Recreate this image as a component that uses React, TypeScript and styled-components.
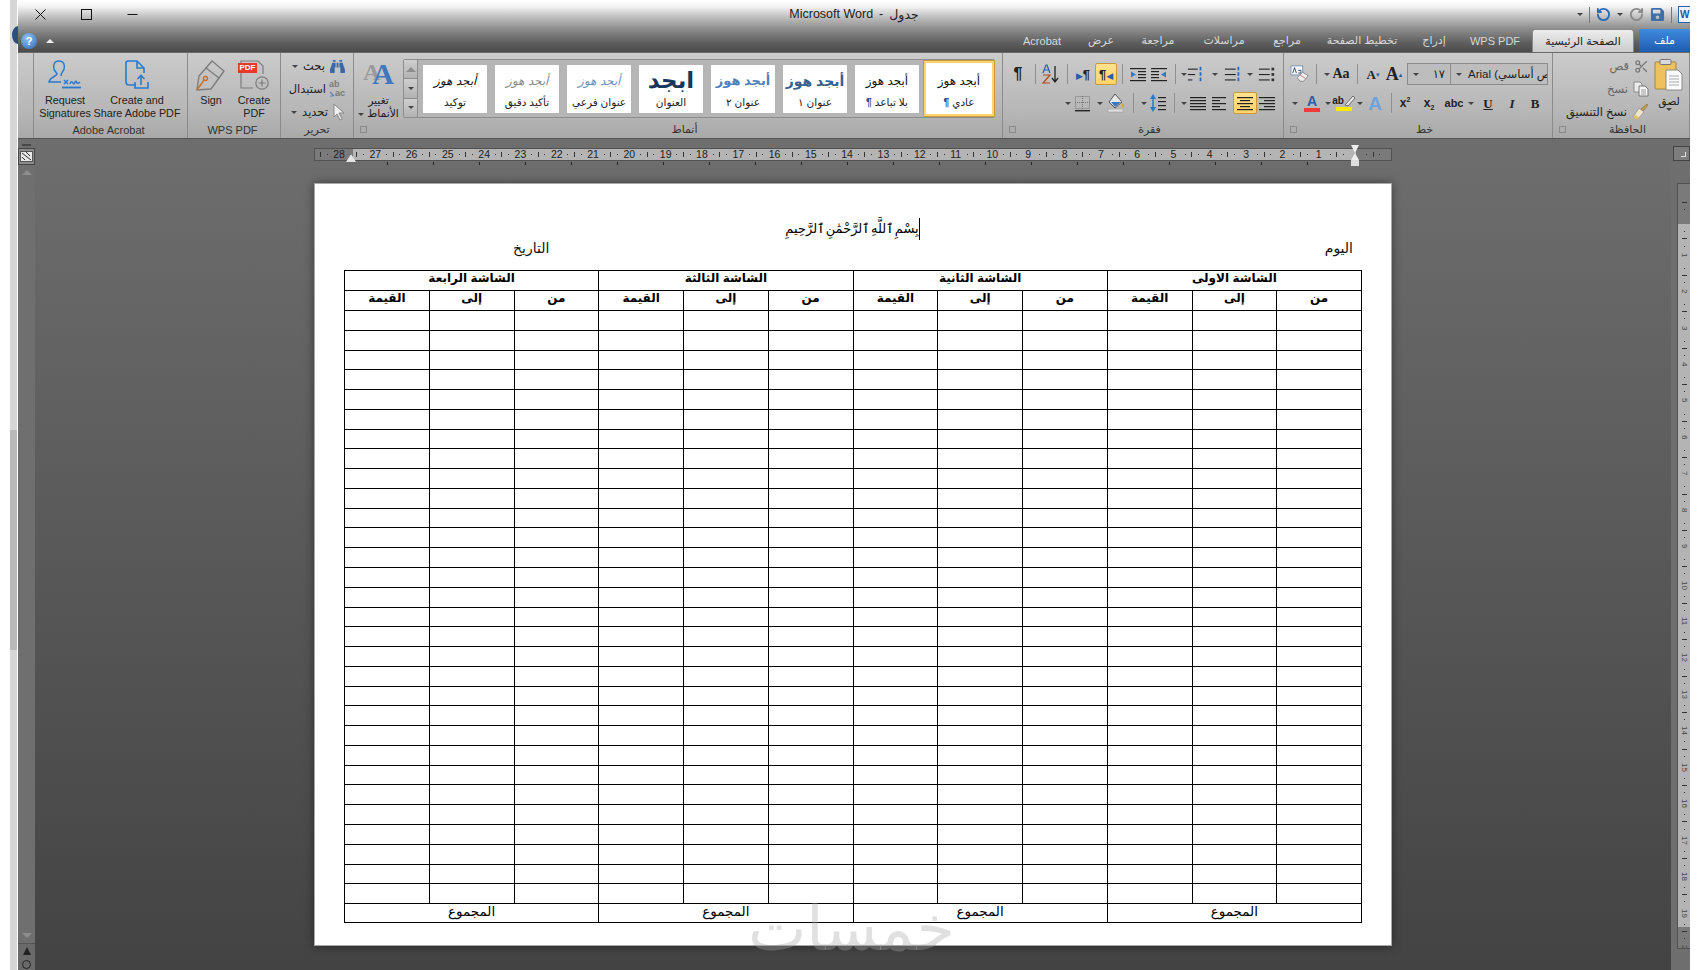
import React from "react";
import styled, { createGlobalStyle } from "styled-components";
import { FaBinoculars, FaSave } from "react-icons/fa";
import { RotateCcw, RotateCw, Scissors } from "lucide-react";

const SANS = `"Liberation Sans", "DejaVu Sans", sans-serif`;

const Global = createGlobalStyle`
  html, body { margin: 0; padding: 0; background: #fff; overflow: hidden; }
  * { box-sizing: border-box; }
  body { font-family: ${SANS}; }
`;

const Shell = styled.div`
  position: relative;
  width: 1700px;
  height: 970px;
  display: flex;
  overflow: hidden;
`;
const LeftEdge = styled.div`
  position: relative;
  width: 18px;
  padding: 430px 1px 0 10px;
  background: linear-gradient(90deg, #fff 0 10px, #d6d6d6 10px 17px, #fff 17px 18px);
`;
const EdgeThumb = styled.div`
  height: 220px;
  background: #b9b9b9;
`;
const EdgeArc = styled.div`
  position: absolute;
  left: 12px;
  top: 26px;
  width: 12px;
  height: 18px;
  border-radius: 50%;
  background: #2a4f86;
`;
const Win = styled.div`
  position: relative;
  width: 1672px;
  display: flex;
  flex-direction: column;
`;
const RightEdge = styled.div`
  width: 10px;
  background: #fff;
`;

/* top bar */
const TopBar = styled.div`
  height: 52px;
  background: linear-gradient(#fff 0, #f4f4f4 12%, #bdbdbd 34%, #8c8c8c 56%, #5f5f5f 82%, #4b4b4b 100%);
`;
const TitleRow = styled.div`
  height: 29px;
  display: grid;
  grid-template-columns: 1fr auto 1fr;
  align-items: center;
`;
const WinButtons = styled.div`
  display: flex;
  align-items: center;
  gap: 35px;
  padding-left: 17px;
`;
const Title = styled.div`
  font-size: 12.5px;
  color: #222;
  display: flex;
  gap: 6px;
`;
const Qat = styled.div`
  display: flex;
  align-items: center;
  justify-content: flex-end;
  gap: 6px;
`;
const QatSep = styled.i`
  width: 1px;
  height: 16px;
  background: #777;
`;
const WordBadge = styled.div`
  width: 12px;
  height: 17px;
  overflow: hidden;
  background: #eef4fb;
  border: 1px solid #2e63a8;
  border-right: 0;
  color: #1e56a0;
  font: bold 10px/15px ${SANS};
  padding-left: 1px;
`;
const TabRow = styled.div`
  height: 23px;
  display: flex;
  align-items: center;
`;
const Help = styled.div`
  width: 16px;
  height: 16px;
  margin-left: 3px;
  border-radius: 50%;
  background: radial-gradient(circle at 40% 30%, #8fc0f0, #2c6cb8);
  color: #fff;
  font: bold 11px/16px ${SANS};
  text-align: center;
`;
const Caret = styled.div`
  margin-left: 9px;
  margin-right: auto;
  border-left: 4px solid transparent;
  border-right: 4px solid transparent;
  border-bottom: 4px solid #eee;
`;
const Tab = styled.div<{ $w: number; $kind?: "home" | "file" }>`
  width: ${(p) => p.$w}px;
  height: 23px;
  display: flex;
  align-items: center;
  justify-content: center;
  font-size: 11px;
  color: ${(p) => (p.$kind === "home" ? "#222" : p.$kind === "file" ? "#fff" : "#d8d8d8")};
  border-radius: 3px 3px 0 0;
  ${(p) => p.$kind === "home" && "background: linear-gradient(#ececec, #cbcbcb); border: 1px solid #8a8a8a; border-bottom: 0; margin-right: 5px;"}
  ${(p) => p.$kind === "file" && "background: linear-gradient(#3f8ade, #1f5cb0);"}
`;

/* ribbon */
const Ribbon = styled.div`
  height: 87px;
  display: flex;
  background: linear-gradient(#cbcbcb, #b6b6b6 70%, #a9a9a9);
  border-top: 1px solid #6a6a6a;
  border-bottom: 1px solid #555;
  color: #222;
`;
const Group = styled.div<{ $w: number }>`
  width: ${(p) => p.$w}px;
  flex: none;
  display: flex;
  flex-direction: column;
  border-right: 1px solid #8b8b8b;
`;
const GroupBody = styled.div<{ $pad?: string }>`
  height: 68px;
  display: flex;
  padding: ${(p) => p.$pad || "0"};
`;
const GroupFoot = styled.div`
  flex: 1;
  display: flex;
  align-items: center;
  font-size: 11px;
  color: #333;
`;
const Launcher = styled.div`
  width: 7px;
  height: 7px;
  margin: 0 0 0 6px;
  border: 1px solid #8a8a8a;
`;
const FootText = styled.div<{ $shift?: number }>`
  flex: 1;
  text-align: center;
  padding-right: ${(p) => p.$shift || 0}px;
`;
const BigTool = styled.div<{ $w: number }>`
  width: ${(p) => p.$w}px;
  flex: none;
  display: flex;
  flex-direction: column;
  align-items: center;
  text-align: center;
  font-size: 10.8px;
  line-height: 13px;
  white-space: nowrap;
`;
const BigIcon = styled.div<{ $h?: number }>`
  height: ${(p) => p.$h || 41}px;
  padding-top: 6px;
`;
const Stack = styled.div<{ $top?: number; $gap?: number; $right?: boolean }>`
  display: flex;
  flex-direction: column;
  padding-top: ${(p) => p.$top || 0}px;
  gap: ${(p) => p.$gap || 0}px;
  margin-left: ${(p) => (p.$right ? "auto" : "0")};
`;
const ToolRow = styled.div<{ $end?: boolean; $gap?: number }>`
  height: 22px;
  flex: none;
  display: flex;
  align-items: center;
  justify-content: ${(p) => (p.$end ? "flex-end" : "flex-start")};
  gap: ${(p) => p.$gap || 0}px;
  font-size: 11.5px;
  white-space: nowrap;
`;
const Cell = styled.div<{ $w: number; $on?: boolean; $ml?: number }>`
  width: ${(p) => p.$w}px;
  height: 22px;
  flex: none;
  margin-left: ${(p) => p.$ml || 0}px;
  display: flex;
  align-items: center;
  justify-content: center;
  color: #222;
  ${(p) => p.$on && "background: linear-gradient(#ffe28f, #ffd26a); border: 1px solid #c99a3b; border-radius: 2px;"}
`;
const Sep = styled.i`
  width: 1px;
  height: 20px;
  background: #8f8f8f;
`;
const Drop = styled.i`
  display: inline-block;
  vertical-align: middle;
  width: 0;
  height: 0;
  border-left: 3px solid transparent;
  border-right: 3px solid transparent;
  border-top: 3px solid #444;
`;
const Glyph = styled.span<{ $size: number; $bold?: boolean; $italic?: boolean; $under?: boolean; $color?: string; $serif?: boolean }>`
  font-family: ${(p) => (p.$serif ? `"Liberation Serif", serif` : SANS)};
  font-size: ${(p) => p.$size}px;
  font-weight: ${(p) => (p.$bold ? 700 : 400)};
  font-style: ${(p) => (p.$italic ? "italic" : "normal")};
  text-decoration: ${(p) => (p.$under ? "underline" : "none")};
  color: ${(p) => p.$color || "#222"};
  line-height: 1;
`;
const Sup = styled.sup`
  font-size: 7px;
  line-height: 0;
`;
const Sub = styled.sub`
  font-size: 7px;
  line-height: 0;
`;
const Swatch = styled.div`
  display: flex;
  flex-direction: column;
  align-items: center;
`;
const SwatchBar = styled.i<{ $color: string }>`
  width: 16px;
  height: 4px;
  background: ${(p) => p.$color};
`;
const Combo = styled.div<{ $w: number; $ml?: number }>`
  width: ${(p) => p.$w}px;
  height: 22px;
  flex: none;
  margin-left: ${(p) => p.$ml || 0}px;
  display: flex;
  align-items: center;
  gap: 6px;
  padding: 0 0 0 5px;
  background: #bdbdbd;
  border: 1px solid #8b8b8b;
  font-size: 11.5px;
  white-space: nowrap;
  overflow: hidden;
`;
const ComboText = styled.span`
  flex: 1;
  text-align: right;
  padding-right: 5px;
`;
const MutedLabel = styled.span`
  color: #666;
`;

/* styles gallery */
const Gallery = styled.div`
  width: 592px;
  height: 59px;
  margin: 6px 0 0 0;
  display: flex;
  gap: 8px;
  background: #b5b5b5;
  border: 1px solid #8d8d8d;
  border-radius: 2px;
`;
const GalleryScroll = styled.div`
  width: 14px;
  flex: none;
  display: flex;
  flex-direction: column;
  border-right: 1px solid #8d8d8d;
  margin-right: -3px;
`;
const ScrollBtn = styled.div`
  flex: 1;
  display: flex;
  align-items: center;
  justify-content: center;
  background: linear-gradient(#cfcfcf, #b2b2b2);
  border-bottom: 1px solid #8d8d8d;
  &:last-child { border-bottom: 0; }
`;
const StyleCard = styled.div<{ $on?: boolean }>`
  width: ${(p) => (p.$on ? 72 : 64)}px;
  height: ${(p) => (p.$on ? 57 : 48)}px;
  margin-top: ${(p) => (p.$on ? 0 : 5)}px;
  margin-left: ${(p) => (p.$on ? -4 : 0)}px;
  flex: none;
  background: #fff;
  ${(p) => p.$on && "border: 3px solid #ffd36e; outline: 1px solid #c99a3b; outline-offset: -1px; padding-top: 2px;"}
  display: flex;
  flex-direction: column;
  align-items: center;
`;
const Sample = styled.div<{ $size?: number; $bold?: boolean; $italic?: boolean; $color?: string }>`
  height: 31px;
  display: flex;
  align-items: center;
  font-size: ${(p) => p.$size || 12}px;
  font-weight: ${(p) => (p.$bold ? 700 : 400)};
  font-style: ${(p) => (p.$italic ? "italic" : "normal")};
  color: ${(p) => p.$color || "#111"};
  white-space: nowrap;
`;
const CardName = styled.div`
  font-size: 10.5px;
  color: #222;
  white-space: nowrap;
`;
const Pilcrow = styled.span`
  color: #2c4f86;
  font-weight: 700;
`;

/* document area */
const Body = styled.div`
  flex: 1;
  min-height: 0;
  display: flex;
  background: linear-gradient(#6e6e6e, #434343);
`;
const LeftRail = styled.div`
  width: 17px;
  flex: none;
  display: flex;
  flex-direction: column;
  align-items: center;
  padding-top: 5px;
  background: #6f6f6f;
`;
const RailGrip = styled.i`
  width: 9px;
  height: 2px;
  background: #474747;
  margin-bottom: 2px;
`;
const RailBtn = styled.div`
  width: 17px;
  height: 17px;
  display: flex;
  align-items: center;
  justify-content: center;
  background: #8b8b8b;
  border: 1px solid #444;
  margin-bottom: 5px;
`;
const RailArrow = styled.i<{ $down?: boolean }>`
  width: 0;
  height: 0;
  border-left: 5px solid transparent;
  border-right: 5px solid transparent;
  ${(p) => (p.$down ? "border-top: 5px solid #8d8d8d;" : "border-bottom: 5px solid #8d8d8d;")}
`;
const RailFill = styled.div`
  flex: 1;
`;
const RailNav = styled.div`
  width: 17px;
  margin-top: 5px;
  padding-top: 3px;
  height: 27px;
  display: flex;
  flex-direction: column;
  align-items: center;
  gap: 5px;
  background: #6a6a6a;
  border-top: 1px solid #555;
`;
const NavDouble = styled.i`
  width: 0;
  height: 0;
  border-left: 4px solid transparent;
  border-right: 4px solid transparent;
  border-bottom: 8px solid #222;
`;
const NavDot = styled.i`
  width: 9px;
  height: 9px;
  border: 1px solid #222;
  border-radius: 50%;
  flex: none;
`;
const Main = styled.div`
  flex: 1;
  padding: 9px 0 0 279px;
  position: relative;
`;
const HRuler = styled.div`
  position: relative;
  width: 1078px;
  height: 13px;
  padding-left: 5px;
  background: linear-gradient(90deg, #7a7a7a 0 38px, #b4b4b4 38px 1041px, #7a7a7a 1041px);
  border: 1px solid #515151;
`;
const RTrack = styled.div`
  display: flex;
  height: 11px;
  overflow: hidden;
`;
const RUnit = styled.div`
  width: 36.3px;
  flex: none;
  display: flex;
  align-items: center;
  justify-content: space-between;
  font: 10.5px/11px ${SANS};
  color: #222;
`;
const RTick = styled.i`
  width: 1px;
  height: 5px;
  background: #333;
`;
const RDot = styled.i`
  width: 1px;
  height: 1px;
  background: #333;
`;
const RNum = styled.span`
  width: 11px;
  text-align: center;
`;
const RLeftMark = styled.i`
  position: absolute;
  left: 31px;
  top: 5px;
  border-left: 5px solid transparent;
  border-right: 5px solid transparent;
  border-bottom: 8px solid #e4e4e4;
`;
const RHour = styled.div`
  position: absolute;
  left: 1035px;
  top: -4px;
  width: 9px;
  display: flex;
  flex-direction: column;
  align-items: center;
`;
const RHourTop = styled.i`
  border-left: 4px solid transparent;
  border-right: 4px solid transparent;
  border-top: 8px solid #eee;
`;
const RHourBot = styled.i`
  border-left: 4px solid transparent;
  border-right: 4px solid transparent;
  border-bottom: 7px solid #eee;
`;
const RHourBox = styled.i`
  width: 8px;
  height: 6px;
  background: #ddd;
`;
const TabStops = styled.div`
  height: 4px;
  margin: 1px 0 17px 73px;
  display: flex;
  gap: 45px;
`;
const TabStop = styled.i`
  width: 1px;
  height: 3px;
  background: #222;
`;
const Page = styled.div`
  width: 1078px;
  height: 763px;
  padding: 33px 30px 0 29px;
  background: #fff;
  border: 1px solid #a8a8a8;
  box-shadow: 0 0 9px rgba(0, 0, 0, 0.45);
`;
const Basmala = styled.div`
  height: 23px;
  display: flex;
  justify-content: center;
  align-items: center;
  font-size: 13px;
  color: #000;
`;
const BasmalaText = styled.span`
  white-space: nowrap;
  letter-spacing: -0.6px;
  word-spacing: -3px;
`;
const Caretline = styled.i`
  width: 1px;
  height: 22px;
  background: #000;
`;
const DateRow = styled.div`
  height: 30px;
  padding: 0 8px 0 169px;
  display: flex;
  justify-content: space-between;
  align-items: flex-start;
  font-size: 14px;
  color: #111;
`;
const Sheet = styled.table`
  width: 1018px;
  table-layout: fixed;
  border-collapse: collapse;
  direction: rtl;
  font-family: ${SANS};
`;
const SheetRow = styled.tr<{ $h: number }>`
  height: ${(p) => p.$h}px;
`;
const SheetCell = styled.td<{ $bold?: boolean; $plain?: boolean }>`
  border: 1px solid #000;
  padding: 0;
  text-align: center;
  vertical-align: top;
  font-size: ${(p) => (p.$plain ? 13.5 : 12)}px;
  font-weight: ${(p) => (p.$bold ? 700 : 400)};
  line-height: 15px;
  color: #000;
`;
const RightRail = styled.div`
  width: 19px;
  flex: none;
  padding: 7px 0 0 2px;
  background: #6e6e6e;
`;
const CornerBtn = styled.div`
  width: 17px;
  height: 15px;
  margin-bottom: 22px;
  background: #7d7d7d;
  border: 1px solid #444;
  display: flex;
  align-items: flex-end;
  justify-content: flex-end;
  padding: 0 3px 3px 0;
`;
const CornerMark = styled.i`
  width: 5px;
  height: 5px;
  border-right: 1px solid #ddd;
  border-bottom: 1px solid #ddd;
`;
const VRuler = styled.div`
  width: 13px;
  margin-left: 4px;
  height: 766px;
  padding-top: 18px;
  overflow: hidden;
  background: linear-gradient(#7a7a7a 0 40px, #b4b4b4 40px 743px, #7a7a7a 743px);
  border: 1px solid #515151;
  border-right: 0;
`;
const VUnit = styled.div`
  height: 36.45px;
  display: flex;
  flex-direction: column;
  align-items: center;
  justify-content: space-between;
  font: 8px/9px ${SANS};
  color: #444;
`;
const VTick = styled.i`
  width: 5px;
  height: 1px;
  background: #333;
`;
const VNum = styled.span`
  writing-mode: vertical-rl;
  height: 9px;
`;
const Watermark = styled.div`
  position: absolute;
  left: 748px;
  top: 896px;
  width: 206px;
  text-align: center;
  font-size: 62px;
  line-height: 66px;
  color: rgba(170, 170, 170, 0.36);
  pointer-events: none;
  white-space: nowrap;
`;

/* drawings */
const Stroke = "#222";
const Bars = ({ rows }: { rows: [number, number][] }) => (
  <svg width="18" height="15" viewBox="0 0 18 15">
    {rows.map((r, i) => (
      <rect key={i} x={r[0]} y={1 + i * 3} width={r[1] - r[0]} height="1.2" fill={Stroke} />
    ))}
  </svg>
);
const justify: [number, number][] = [[1, 17], [1, 17], [1, 17], [1, 17], [1, 17]];
const left: [number, number][] = [[1, 15], [1, 9], [1, 15], [1, 9], [1, 15]];
const center: [number, number][] = [[1, 17], [4, 14], [1, 17], [4, 14], [1, 17]];
const right: [number, number][] = [[1, 17], [6, 17], [1, 17], [6, 17], [1, 17]];

const IndentIcon = ({ flip }: { flip?: boolean }) => (
  <svg width="18" height="15" viewBox="0 0 18 15">
    <g transform={flip ? "translate(18 0) scale(-1 1)" : undefined}>
      {[1, 4, 7, 10, 13].map((y) => (
        <rect key={y} x="1" y={y} width={y === 1 || y === 13 ? 16 : 8} height="1.2" fill={Stroke} />
      ))}
      <path d="M11 7.5 L16 4.5 V10.5 Z" fill="#2a7ad0" />
    </g>
  </svg>
);
const ListIcon = ({ kind }: { kind: "multi" | "num" | "bul" }) => (
  <svg width="20" height="16" viewBox="0 0 20 16">
    {[2, 8, 14].map((y, i) => (
      <rect key={y} x="1" y={y} width={kind === "multi" ? 11 - i * 3 : 12} height="1.2" fill={Stroke} />
    ))}
    {[2, 8, 14].map((y) =>
      kind === "bul" ? (
        <rect key={y} x="15" y={y - 1} width="3" height="3" fill="#333" />
      ) : (
        <rect key={y} x={kind === "multi" ? 14 : 15} y={y - 2} width="2" height="4" fill="#2a6ab8" />
      )
    )}
  </svg>
);
const SortIcon = () => (
  <svg width="18" height="20" viewBox="0 0 18 20">
    <path d="M1 9 L4 1 H5 L8 9 M2.5 6 H6.5" stroke="#2a5ea8" strokeWidth="1.2" fill="none" />
    <path d="M1 11 H8 L1 19 H8" stroke="#b04a20" strokeWidth="1.2" fill="none" />
    <path d="M13 2 V17 M10 14 L13 18 L16 14" stroke="#222" strokeWidth="1.3" fill="none" />
  </svg>
);
const DirIcon = ({ on }: { on?: boolean }) => (
  <Swatch>
    <Glyph $size={13} $bold>
      {on ? "¶" : ""}
      <Glyph $size={9} $color="#2a5ea8">{on ? "◀" : "▶"}</Glyph>
      {on ? "" : "¶"}
    </Glyph>
  </Swatch>
);
const BordersIcon = () => (
  <svg width="18" height="17" viewBox="0 0 18 17">
    <rect x="1.5" y="1.5" width="14" height="12" fill="none" stroke="#777" strokeDasharray="1 1" />
    <path d="M8.5 1 V14 M1 7.5 H16" stroke="#777" strokeDasharray="1 1" />
    <rect x="1" y="15" width="15" height="1.4" fill="#222" />
  </svg>
);
const ShadeIcon = () => (
  <svg width="20" height="20" viewBox="0 0 20 20">
    <path d="M9 1 L16 9 L9 15 L3 9 Z" fill="#e8e8e8" stroke="#555" />
    <path d="M5 9 H15 L9 14 Z" fill="#3a78c0" />
    <path d="M17 10 Q19 13 17 15 Q15 13 17 10" fill="#e4a020" />
    <rect x="2" y="16" width="15" height="3" fill="#ddd" stroke="#999" strokeWidth=".5" />
  </svg>
);
const SpacingIcon = () => (
  <svg width="18" height="20" viewBox="0 0 18 20">
    <path d="M4 1 L7 6 H1 Z M4 19 L7 14 H1 Z" fill="#2a7ad0" />
    <path d="M4 6 V14" stroke="#2a7ad0" strokeWidth="1.5" />
    {[4, 8, 12, 16].map((y) => <rect key={y} x="9" y={y} width="8" height="1.2" fill={Stroke} />)}
  </svg>
);
const EraserIcon = () => (
  <svg width="22" height="20" viewBox="0 0 22 20">
    <rect x="1" y="1" width="13" height="10" fill="#f6f6f6" stroke="#7a92b0" />
    <path d="M3 9 L5 3 L7 9 M9 9 H12 M9 6 H12 V9" stroke="#26497c" fill="none" />
    <path d="M8 14 L14 8 L20 12 L15 18 L11 18 Z" fill="#eeeeee" stroke="#888" />
    <path d="M11 11 L17 15" stroke="#c77" />
  </svg>
);
const MarkerPen = () => (
  <svg width="12" height="12" viewBox="0 0 12 12">
    <path d="M1 10 L9 1 L11 3 L4 11 Z" fill="#e9e9e9" stroke="#6a6a6a" />
  </svg>
);
const PasteIcon = () => (
  <svg width="30" height="32" viewBox="0 0 30 32">
    <rect x="1" y="3" width="21" height="27" rx="1" fill="#edc25e" stroke="#a9853a" />
    <rect x="6" y="0.5" width="11" height="5" rx="1" fill="#d9d9d9" stroke="#777" />
    <path d="M12 11 H24 L28 15 V31 H12 Z" fill="#fbfbfb" stroke="#8a8a8a" />
    <path d="M15 17 H25 M15 20 H25 M15 23 H25 M15 26 H25" stroke="#aaa" />
  </svg>
);
const CopyIcon = () => (
  <svg width="16" height="16" viewBox="0 0 16 16">
    <path d="M1 1 H7 L9 3 V11 H1 Z" fill="#ececec" stroke="#8a8a8a" />
    <path d="M6 5 H12 L15 8 V15 H6 Z" fill="#f6f6f6" stroke="#777" />
    <path d="M8 9 H13 M8 11 H13 M8 13 H13" stroke="#999" />
  </svg>
);
const BrushIcon = () => (
  <svg width="18" height="18" viewBox="0 0 18 18">
    <path d="M10 6 L16 1 L17 2 L12 8 Z" fill="#c89b4e" stroke="#8a6a30" strokeWidth=".6" />
    <path d="M2 14 L8 5 L13 9 L6 17 Z" fill="#ede6cf" stroke="#888" strokeWidth=".7" />
    <path d="M2 14 L5 12 L8 15 L6 17 Z" fill="#e8c260" />
  </svg>
);
const ReplaceMark = () => (
  <svg width="6" height="6" viewBox="0 0 6 6">
    <path d="M1 1 L5 5 M1 5 H4" stroke="#5b83b8" strokeWidth="1.2" fill="none" />
  </svg>
);
const PointerIcon = () => (
  <svg width="12" height="18" viewBox="0 0 12 18">
    <path d="M1 1 V14 L4 11 L7 17 L9 16 L6 10 H11 Z" fill="#f0f0f0" stroke="#888" />
  </svg>
);
const SignatureIcon = () => (
  <svg width="34" height="30" viewBox="0 0 34 30" fill="none" stroke="#2a7bd0" strokeWidth="1.5">
    <path d="M11 2 C6 2 5 6 6 10 C7 13 9 14 9 15 C9 17 2 18 1 23 H13" />
    <path d="M11 2 C16 2 17 6 16 10 C15 13 13 14 13 17" />
    <path d="M16 21 L20 25 M20 21 L16 25" />
    <path d="M22 25 Q23 21 25 24 Q26 26 27 23 Q28 21 29 24 Q30 25 32 23" />
    <path d="M14 28.5 H33" strokeWidth="1.8" />
  </svg>
);
const ShareDocIcon = () => (
  <svg width="26" height="32" viewBox="0 0 26 32" fill="none" stroke="#2a7bd0" strokeWidth="1.6">
    <path d="M12 26 H5 Q2 26 2 23 V4 Q2 2 4 2 H13 L20 9 V14" />
    <path d="M13 2 V9 H20" />
    <path d="M17 26 V17 M13.5 20 L17 16.5 L20.5 20" />
    <path d="M11 23 V29 H24 V23" />
  </svg>
);
const PenIcon = () => (
  <svg width="32" height="34" viewBox="0 0 32 34" fill="none" stroke="#7d7d7d" strokeWidth="1.4">
    <path d="M17 2 L29 12 L24 19 L11 9 Z" />
    <path d="M11 9 L4 17 L2 31 L16 30 L24 19" />
    <path d="M2 31 L9 21" stroke="#c86f2c" />
    <circle cx="10.5" cy="19.5" r="2" stroke="#c86f2c" />
  </svg>
);
const PdfBadge = styled.span`
  position: absolute;
  left: 0;
  top: 4px;
  width: 19px;
  height: 10px;
  background: #e8382c;
  color: #fff;
  font: bold 8px/10px ${SANS};
  text-align: center;
`;
const PdfBox = styled.div`
  position: relative;
  width: 32px;
  height: 34px;
`;
const PdfDocIcon = () => (
  <PdfBox>
    <svg width="32" height="34" viewBox="0 0 32 34" fill="none">
      <path d="M3 4 V2 H20 L25 7 V15 M3 13 V29 H15" stroke="#7d7d7d" strokeWidth="1.2" />
      <circle cx="24" cy="24" r="6.2" stroke="#7d7d7d" strokeWidth="1.2" />
      <path d="M24 20.5 V27.5 M20.5 24 H27.5" stroke="#7d7d7d" strokeWidth="1.2" />
    </svg>
    <PdfBadge>PDF</PdfBadge>
  </PdfBox>
);
const StylesA = styled.div`
  display: flex;
  align-items: flex-end;
  height: 30px;
  font-family: "Liberation Serif", serif;
  font-weight: 700;
`;
const StylesAGray = styled.span`
  font-size: 24px;
  line-height: 24px;
  color: #9a9a9a;
  margin-bottom: 5px;
`;
const StylesABlue = styled.span`
  font-size: 30px;
  line-height: 30px;
  color: #3f78be;
  margin-left: -8px;
`;
const ReplaceStack = styled.div`
  display: flex;
  flex-direction: column;
  font: bold 9px/9px ${SANS};
  color: #7a7a7a;
`;
const ReplaceLine = styled.span`
  display: flex;
  align-items: center;
`;
const RailIcon = () => (
  <svg width="13" height="11" viewBox="0 0 13 11">
    <rect x="0.5" y="0.5" width="12" height="10" fill="#e8e8e8" stroke="#555" />
    <path d="M2 2 L11 9 M6 1 L10 5 M2 6 L5 9" stroke="#333" />
  </svg>
);
const CloseX = () => (
  <svg width="11" height="11" viewBox="0 0 11 11"><path d="M0.5 0.5 L10.5 10.5 M10.5 0.5 L0.5 10.5" stroke="#111" /></svg>
);
const MaxBox = () => (
  <svg width="11" height="11" viewBox="0 0 11 11"><rect x="0.5" y="0.5" width="10" height="10" fill="none" stroke="#111" /></svg>
);
const MinBar = () => (
  <svg width="11" height="11" viewBox="0 0 11 11"><path d="M0.5 5.5 H10.5" stroke="#111" /></svg>
);

const rulerNums = Array.from({ length: 30 }, (_, i) => 28 - i);
const vNums = Array.from({ length: 21 }, (_, i) => i);
const tabStops = Array.from({ length: 21 }, (_, i) => i);
const emptyRows = Array.from({ length: 30 }, (_, i) => Math.round(310 + (i + 1) * 19.77) - Math.round(310 + i * 19.77));
const screens = ["الشاشة الاولى", "الشاشة الثانية", "الشاشة الثالثة", "الشاشة الرابعة"];
const heads = ["من", "إلى", "القيمة"];

const tabs: [string, number][] = [
  ["Acrobat", 64], ["عرض", 54], ["مراجعة", 60], ["مراسلات", 72], ["مراجع", 54],
  ["تخطيط الصفحة", 96], ["إدراج", 48], ["WPS PDF", 74],
];

export default function App() {
  return (
    <Shell>
      <Global />
      <LeftEdge>
        <EdgeArc />
        <EdgeThumb />
      </LeftEdge>
      <Win>
        <TopBar>
          <TitleRow>
            <WinButtons>
              <CloseX />
              <MaxBox />
              <MinBar />
            </WinButtons>
            <Title>
              <span>Microsoft Word</span>
              <span>-</span>
              <span>جدول</span>
            </Title>
            <Qat>
              <Drop />
              <QatSep />
              <RotateCcw size={15} strokeWidth={3} color="#2a6ab8" />
              <Drop />
              <RotateCw size={15} strokeWidth={3} color="#8a8a8a" />
              <FaSave size={15} color="#3f6ea8" />
              <QatSep />
              <WordBadge>W</WordBadge>
            </Qat>
          </TitleRow>
          <TabRow>
            <Help>?</Help>
            <Caret />
            {tabs.map(([t, w]) => (
              <Tab key={t} $w={w}>{t}</Tab>
            ))}
            <Tab $w={102} $kind="home">الصفحة الرئيسية</Tab>
            <Tab $w={51} $kind="file">ملف</Tab>
          </TabRow>
        </TopBar>

        <Ribbon>
          <Group $w={16} />
          <Group $w={154}>
            <GroupBody $pad="0 0 0 4px">
              <BigTool $w={54}>
                <BigIcon><SignatureIcon /></BigIcon>
                Request<br />Signatures
              </BigTool>
              <BigTool $w={90}>
                <BigIcon><ShareDocIcon /></BigIcon>
                Create and<br />Share Adobe PDF
              </BigTool>
            </GroupBody>
            <GroupFoot><FootText $shift={4}>Adobe Acrobat</FootText></GroupFoot>
          </Group>
          <Group $w={93}>
            <GroupBody $pad="0 0 0 2px">
              <BigTool $w={42}>
                <BigIcon><PenIcon /></BigIcon>
                Sign
              </BigTool>
              <BigTool $w={44}>
                <BigIcon><PdfDocIcon /></BigIcon>
                Create<br />PDF
              </BigTool>
            </GroupBody>
            <GroupFoot><FootText $shift={3}>WPS PDF</FootText></GroupFoot>
          </Group>
          <Group $w={73}>
            <GroupBody $pad="0 8px 0 0">
              <Stack $top={2} $gap={1} $right>
                <ToolRow $end $gap={5}>
                  <Drop />
                  <span>بحث</span>
                  <FaBinoculars size={15} color="#3a68a6" />
                </ToolRow>
                <ToolRow $end $gap={3}>
                  <span>استبدال</span>
                  <ReplaceStack>
                    <span>ab</span>
                    <ReplaceLine><ReplaceMark />ac</ReplaceLine>
                  </ReplaceStack>
                </ToolRow>
                <ToolRow $end $gap={5}>
                  <Drop />
                  <span>تحديد</span>
                  <PointerIcon />
                </ToolRow>
              </Stack>
            </GroupBody>
            <GroupFoot><FootText>تحرير</FootText></GroupFoot>
          </Group>
          <Group $w={649}>
            <GroupBody>
              <BigTool $w={49}>
                <BigIcon>
                  <StylesA><StylesAGray>A</StylesAGray><StylesABlue>A</StylesABlue></StylesA>
                </BigIcon>
                تغيير<br />
                <span><Drop /> الأنماط</span>
              </BigTool>
              <Gallery>
                <GalleryScroll>
                  <ScrollBtn><RailArrow /></ScrollBtn>
                  <ScrollBtn><Drop /></ScrollBtn>
                  <ScrollBtn><Drop /></ScrollBtn>
                </GalleryScroll>
                <StyleCard><Sample $italic>أبجد هوز</Sample><CardName>توكيد</CardName></StyleCard>
                <StyleCard><Sample $italic $color="#8a8a8a">أبجد هوز</Sample><CardName>تأكيد دقيق</CardName></StyleCard>
                <StyleCard><Sample $italic $color="#6e93bd">أبجد هوز</Sample><CardName>عنوان فرعي</CardName></StyleCard>
                <StyleCard><Sample $size={23} $bold $color="#17365d">ابجد</Sample><CardName>العنوان</CardName></StyleCard>
                <StyleCard><Sample $size={13} $bold $color="#4f81bd">أبجد هوز</Sample><CardName>عنوان ٢</CardName></StyleCard>
                <StyleCard><Sample $size={14} $bold $color="#366091">أبجد هوز</Sample><CardName>عنوان ١</CardName></StyleCard>
                <StyleCard><Sample>أبجد هوز</Sample><CardName><Pilcrow>¶</Pilcrow> بلا تباعد</CardName></StyleCard>
                <StyleCard $on><Sample>أبجد هوز</Sample><CardName><Pilcrow>¶</Pilcrow> عادي</CardName></StyleCard>
              </Gallery>
            </GroupBody>
            <GroupFoot>
              <Launcher />
              <FootText>أنماط</FootText>
            </GroupFoot>
          </Group>
          <Group $w={281}>
            <GroupBody $pad="0 0 0 5px">
              <Stack $top={10} $gap={7}>
                <ToolRow>
                  <Cell $w={20}><Glyph $size={16} $bold>¶</Glyph></Cell>
                  <Cell $w={14}><Sep /></Cell>
                  <Cell $w={18}><SortIcon /></Cell>
                  <Cell $w={14}><Sep /></Cell>
                  <Cell $w={18}><DirIcon /></Cell>
                  <Cell $w={22} $on $ml={3}><DirIcon on /></Cell>
                  <Cell $w={10}><Sep /></Cell>
                  <Cell $w={21}><IndentIcon flip /></Cell>
                  <Cell $w={21}><IndentIcon /></Cell>
                  <Cell $w={12}><Sep /></Cell>
                  <Cell $w={6}><Drop /></Cell>
                  <Cell $w={18}><ListIcon kind="multi" /></Cell>
                  <Cell $w={19}><Drop /></Cell>
                  <Cell $w={18}><ListIcon kind="num" /></Cell>
                  <Cell $w={16}><Drop /></Cell>
                  <Cell $w={18}><ListIcon kind="bul" /></Cell>
                </ToolRow>
                <ToolRow>
                  <Cell $w={56} />
                  <Cell $w={8}><Drop /></Cell>
                  <Cell $w={22}><BordersIcon /></Cell>
                  <Cell $w={12}><Drop /></Cell>
                  <Cell $w={20}><ShadeIcon /></Cell>
                  <Cell $w={14}><Sep /></Cell>
                  <Cell $w={8}><Drop /></Cell>
                  <Cell $w={19}><SpacingIcon /></Cell>
                  <Cell $w={14}><Sep /></Cell>
                  <Cell $w={6}><Drop /></Cell>
                  <Cell $w={21}><Bars rows={justify} /></Cell>
                  <Cell $w={24}><Bars rows={left} /></Cell>
                  <Cell $w={24} $on $ml={1}><Bars rows={center} /></Cell>
                  <Cell $w={18} $ml={1}><Bars rows={right} /></Cell>
                </ToolRow>
              </Stack>
            </GroupBody>
            <GroupFoot>
              <Launcher />
              <FootText>فقرة</FootText>
            </GroupFoot>
          </Group>
          <Group $w={269}>
            <GroupBody $pad="0 0 0 6px">
              <Stack $top={10} $gap={7}>
                <ToolRow>
                  <Cell $w={20}><EraserIcon /></Cell>
                  <Cell $w={12}><Sep /></Cell>
                  <Cell $w={10}><Drop /></Cell>
                  <Cell $w={18}><Glyph $size={14} $bold $serif>Aa</Glyph></Cell>
                  <Cell $w={14}><Sep /></Cell>
                  <Cell $w={18}><Glyph $size={13} $bold $serif>A</Glyph><Glyph $size={7} $color="#2a5ea8">▾</Glyph></Cell>
                  <Cell $w={20} $ml={2}><Glyph $size={18} $bold $serif>A</Glyph><Glyph $size={7} $color="#2a5ea8">▴</Glyph></Cell>
                  <Combo $w={44} $ml={3}>
                    <Drop />
                    <ComboText>١٧</ComboText>
                  </Combo>
                  <Combo $w={98} $ml={-1}>
                    <Drop />
                    <span>Arial (ص أساسي</span>
                  </Combo>
                </ToolRow>
                <ToolRow>
                  <Cell $w={10}><Drop /></Cell>
                  <Cell $w={18} $ml={3}>
                    <Swatch>
                      <Glyph $size={14} $bold $color="#2a5ea8">A</Glyph>
                      <SwatchBar $color="#ee3a3a" />
                    </Swatch>
                  </Cell>
                  <Cell $w={13}><Drop /></Cell>
                  <Cell $w={20}>
                    <Swatch>
                      <ReplaceLine>
                        <Glyph $size={10} $bold>ab</Glyph>
                        <MarkerPen />
                      </ReplaceLine>
                      <SwatchBar $color="#ffea00" />
                    </Swatch>
                  </Cell>
                  <Cell $w={12}><Drop /></Cell>
                  <Cell $w={18}><Glyph $size={19} $bold $color="#6fa3d8">A</Glyph></Cell>
                  <Cell $w={14}><Sep /></Cell>
                  <Cell $w={14}><Glyph $size={12} $bold>x<Sup>2</Sup></Glyph></Cell>
                  <Cell $w={14} $ml={10}><Glyph $size={12} $bold>x<Sub>2</Sub></Glyph></Cell>
                  <Cell $w={16} $ml={10}><Glyph $size={11} $bold>abc</Glyph></Cell>
                  <Cell $w={18}><Drop /></Cell>
                  <Cell $w={16}><Glyph $size={13} $bold $under $serif>U</Glyph></Cell>
                  <Cell $w={16} $ml={8}><Glyph $size={13} $bold $italic $serif>I</Glyph></Cell>
                  <Cell $w={16} $ml={7}><Glyph $size={13} $bold $serif>B</Glyph></Cell>
                </ToolRow>
              </Stack>
            </GroupBody>
            <GroupFoot>
              <Launcher />
              <FootText>خط</FootText>
            </GroupFoot>
          </Group>
          <Group $w={137}>
            <GroupBody>
              <Stack $top={2} $gap={1} $right>
                <ToolRow $end $gap={5}>
                  <MutedLabel>قص</MutedLabel>
                  <Scissors size={15} color="#777" />
                </ToolRow>
                <ToolRow $end $gap={5}>
                  <MutedLabel>نسخ</MutedLabel>
                  <CopyIcon />
                </ToolRow>
                <ToolRow $end $gap={4}>
                  <span>نسخ التنسيق</span>
                  <BrushIcon />
                </ToolRow>
              </Stack>
              <BigTool $w={40}>
                <BigIcon $h={42}><PasteIcon /></BigIcon>
                لصق
                <Drop />
              </BigTool>
            </GroupBody>
            <GroupFoot>
              <Launcher />
              <FootText>الحافظة</FootText>
            </GroupFoot>
          </Group>
        </Ribbon>

        <Body>
          <LeftRail>
            <RailGrip />
            <RailBtn><RailIcon /></RailBtn>
            <RailArrow />
            <RailFill />
            <RailArrow $down />
            <RailNav>
              <NavDouble />
              <NavDot />
            </RailNav>
          </LeftRail>
          <Main>
            <HRuler>
              <RTrack>
                {rulerNums.map((n) => (
                  <RUnit key={n}>
                    <RTick />
                    <RDot />
                    <RNum>{n > 0 ? n : ""}</RNum>
                    <RDot />
                    <span />
                  </RUnit>
                ))}
              </RTrack>
              <RLeftMark />
              <RHour>
                <RHourTop />
                <RHourBot />
                <RHourBox />
              </RHour>
            </HRuler>
            <TabStops>
              {tabStops.map((t) => <TabStop key={t} />)}
            </TabStops>
            <Page>
              <Basmala>
                <BasmalaText>بِسْمِ ٱللَّهِ ٱلرَّحْمَٰنِ ٱلرَّحِيمِ</BasmalaText>
                <Caretline />
              </Basmala>
              <DateRow>
                <span>التاريخ</span>
                <span>اليوم</span>
              </DateRow>
              <Sheet>
                <tbody>
                  <SheetRow $h={20}>
                    {screens.map((s) => (
                      <SheetCell key={s} colSpan={3} $bold>{s}</SheetCell>
                    ))}
                  </SheetRow>
                  <SheetRow $h={20}>
                    {screens.flatMap((s) =>
                      heads.map((h) => <SheetCell key={s + h} $bold>{h}</SheetCell>)
                    )}
                  </SheetRow>
                  {emptyRows.map((h, i) => (
                    <SheetRow key={i} $h={h}>
                      {Array.from({ length: 12 }, (_, c) => <SheetCell key={c} />)}
                    </SheetRow>
                  ))}
                  <SheetRow $h={19}>
                    {screens.map((s) => (
                      <SheetCell key={s} colSpan={3} $plain>المجموع</SheetCell>
                    ))}
                  </SheetRow>
                </tbody>
              </Sheet>
            </Page>
          </Main>
          <RightRail>
            <CornerBtn><CornerMark /></CornerBtn>
            <VRuler>
              {vNums.map((n) => (
                <VUnit key={n}>
                  <VTick />
                  <RDot />
                  <VNum>{n > 0 ? n : ""}</VNum>
                  <RDot />
                  <span />
                </VUnit>
              ))}
            </VRuler>
          </RightRail>
        </Body>
      </Win>
      <RightEdge />
      <Watermark>خمسات</Watermark>
    </Shell>
  );
}
